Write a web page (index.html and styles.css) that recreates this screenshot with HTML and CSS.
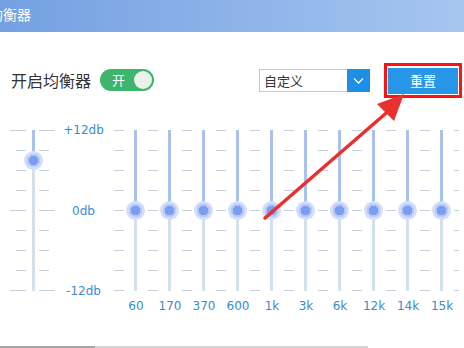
FILE: index.html
```html
<!DOCTYPE html>
<html lang="zh-CN">
<head>
    <meta charset="UTF-8">
    <meta name="viewport" content="width=device-width, initial-scale=1.0">
    <title>均衡器</title>
    <link rel="stylesheet" href="styles.css">
</head>
<body>
    <div class="page">
        <div class="titlebar"><span class="title">均衡器</span></div>

        <div class="controls">
            <span class="switch-label">开启均衡器</span>
            <span class="switch"><span class="switch-text">开</span><span class="switch-knob"></span></span>
            <div class="preset">
                <span class="preset-value">自定义</span>
                <span class="preset-arrow">
                    <svg width="23" height="23" viewBox="0 0 23 23"><polyline points="7,9.5 11.5,14 16,9.5" fill="none" stroke="#fff" stroke-width="1.3"/></svg>
                </span>
            </div>
            <div class="reset-mark"><button class="reset">重置</button></div>
        </div>

        <div class="eq">
            <div class="band-pre">
                <div class="rail-pre"><div class="track" style="--pos:30px"><span class="knob"></span></div></div>
            </div>
            <div class="scale">
                <span>+12db</span>
                <span>0db</span>
                <span>-12db</span>
            </div>
            <div class="bands">
                <div class="band"><div class="rail"><div class="track" style="--pos:80px"><span class="knob"></span></div></div><span class="freq">60</span></div>
                <div class="band"><div class="rail"><div class="track" style="--pos:80px"><span class="knob"></span></div></div><span class="freq">170</span></div>
                <div class="band"><div class="rail"><div class="track" style="--pos:80px"><span class="knob"></span></div></div><span class="freq">370</span></div>
                <div class="band"><div class="rail"><div class="track" style="--pos:80px"><span class="knob"></span></div></div><span class="freq">600</span></div>
                <div class="band"><div class="rail"><div class="track" style="--pos:80px"><span class="knob"></span></div></div><span class="freq">1k</span></div>
                <div class="band"><div class="rail"><div class="track" style="--pos:80px"><span class="knob"></span></div></div><span class="freq">3k</span></div>
                <div class="band"><div class="rail"><div class="track" style="--pos:80px"><span class="knob"></span></div></div><span class="freq">6k</span></div>
                <div class="band"><div class="rail"><div class="track" style="--pos:80px"><span class="knob"></span></div></div><span class="freq">12k</span></div>
                <div class="band"><div class="rail"><div class="track" style="--pos:80px"><span class="knob"></span></div></div><span class="freq">14k</span></div>
                <div class="band"><div class="rail"><div class="track" style="--pos:80px"><span class="knob"></span></div></div><span class="freq">15k</span></div>
            </div>
        </div>

        <div class="scrollbar"><span class="thumb"></span></div>

        <!-- red annotation arrow pointing at the reset button -->
        <svg class="annotation" width="464" height="348" viewBox="0 0 464 348">
            <line x1="265" y1="218" x2="392" y2="108" stroke="#e8312e" stroke-width="3.5" stroke-linecap="round"/>
            <polygon points="404,94 377,104 394,121" fill="#e8312e"/>
        </svg>
    </div>
</body>
</html>
```

FILE: styles.css
```css
body {
    margin: 0;
    font-family: "Noto Sans CJK SC", "DejaVu Sans", sans-serif;
    background: #fff;
}
.page {
    position: relative;
    width: 464px;
    height: 348px;
    display: flex;
    flex-direction: column;
    overflow: hidden;
}
.titlebar {
    height: 32px;
    background: linear-gradient(to right, #74a0e2, #a5c6ef);
    overflow: hidden;
}
.title {
    display: block;
    margin-left: -11px;
    font-size: 14px;
    line-height: 28px;
    color: #fff;
}
.controls {
    display: flex;
    align-items: center;
    height: 36px;
    margin-top: 30px;
    padding: 0 2px 0 11px;
}
.switch-label {
    font-size: 16px;
    color: #333;
    width: 80px;
    white-space: nowrap;
}
.switch {
    margin-left: 9px;
    width: 54px;
    height: 22px;
    border-radius: 11px;
    background: #3db56c;
    display: flex;
    align-items: center;
    justify-content: space-between;
    padding: 0 2px 0 12px;
    box-sizing: border-box;
}
.switch-text {
    color: #fff;
    font-size: 13px;
    line-height: 22px;
}
.switch-knob {
    width: 18px;
    height: 18px;
    border-radius: 50%;
    background: #e8f2ea;
}
.preset {
    margin-left: auto;
    width: 111px;
    height: 23px;
    box-sizing: border-box;
    border: 1px solid #c9c9c9;
    display: flex;
}
.preset-value {
    flex: 1;
    font-size: 13px;
    line-height: 21px;
    padding-left: 4px;
    color: #333;
}
.preset-arrow {
    width: 23px;
    height: 23px;
    margin: -1px -1px -1px 0;
    background: #1d8fe6;
}
.preset-arrow svg {
    display: block;
}
.reset-mark {
    margin-left: 14px;
    border: 3px solid #ff1212;
    padding: 2px 1px 1px;
    display: flex;
}
.reset {
    width: 70px;
    height: 26px;
    border: 0;
    padding: 0;
    background: #2896e7;
    color: #fff;
    font-family: inherit;
    font-size: 13px;
}
.eq {
    display: flex;
    align-items: flex-start;
    margin-top: 32px;
}
.band-pre {
    width: 55px;
}
.rail-pre {
    height: 161px;
    padding-left: 32px;
    background-image:
        repeating-linear-gradient(to bottom, #c9cfe0 0 1px, transparent 1px 20px),
        repeating-linear-gradient(to bottom, #c9cfe0 0 1px, transparent 1px 20px),
        repeating-linear-gradient(to bottom, #c9cfe0 0 1px, transparent 1px 80px),
        repeating-linear-gradient(to bottom, #c9cfe0 0 1px, transparent 1px 80px);
    background-size: 10px 161px, 10px 161px, 6px 161px, 6px 161px;
    background-position: 16px 0, 39px 0, 10px 0, 49px 0;
    background-repeat: no-repeat;
}
.track {
    position: relative;
    width: 3px;
    height: 161px;
    background: linear-gradient(to bottom, #a9c1ee var(--pos), #d3e2ea var(--pos));
}
.knob {
    position: absolute;
    left: -8px;
    top: calc(var(--pos) - 9px);
    width: 19px;
    height: 19px;
    border-radius: 50%;
    background: radial-gradient(circle, #7a9cf2 0 4.5px, #b4c7f6 5px 6.5px, #d4def8 7px 9.5px);
}
.scale {
    width: 57px;
    padding-right: 7px;
    height: 175px;
    margin-top: -7px;
    display: flex;
    flex-direction: column;
    justify-content: space-between;
    align-items: center;
    font-family: "DejaVu Sans", sans-serif;
    font-size: 12px;
    line-height: 14px;
    color: #3a8ccb;
    background-image: repeating-linear-gradient(to bottom, #c9cfe0 0 1px, transparent 1px 20px);
    background-size: 5px 161px;
    background-position: right 0 top 7px;
    background-repeat: no-repeat;
}
.bands {
    display: flex;
}
.band {
    width: 34px;
    display: flex;
    flex-direction: column;
    align-items: center;
}
.rail {
    width: 34px;
    height: 161px;
    box-sizing: border-box;
    padding-left: 15px;
    background-image:
        repeating-linear-gradient(to bottom, #c9cfe0 0 1px, transparent 1px 20px),
        repeating-linear-gradient(to bottom, #c9cfe0 0 1px, transparent 1px 20px);
    background-size: 5px 161px;
    background-position: left 0 top 0, right 0 top 0;
    background-repeat: no-repeat;
}
.freq {
    margin-top: 8px;
    font-family: "DejaVu Sans", sans-serif;
    font-size: 12px;
    line-height: 14px;
    color: #3a8ccb;
    white-space: nowrap;
}
.scrollbar {
    margin-top: auto;
    width: 368px;
    height: 2px;
    background: #d6d6d6;
    display: flex;
}
.thumb {
    width: 95px;
    background: #a6a6a6;
}
.annotation {
    position: absolute;
    left: 0;
    top: 0;
    pointer-events: none;
}
```
